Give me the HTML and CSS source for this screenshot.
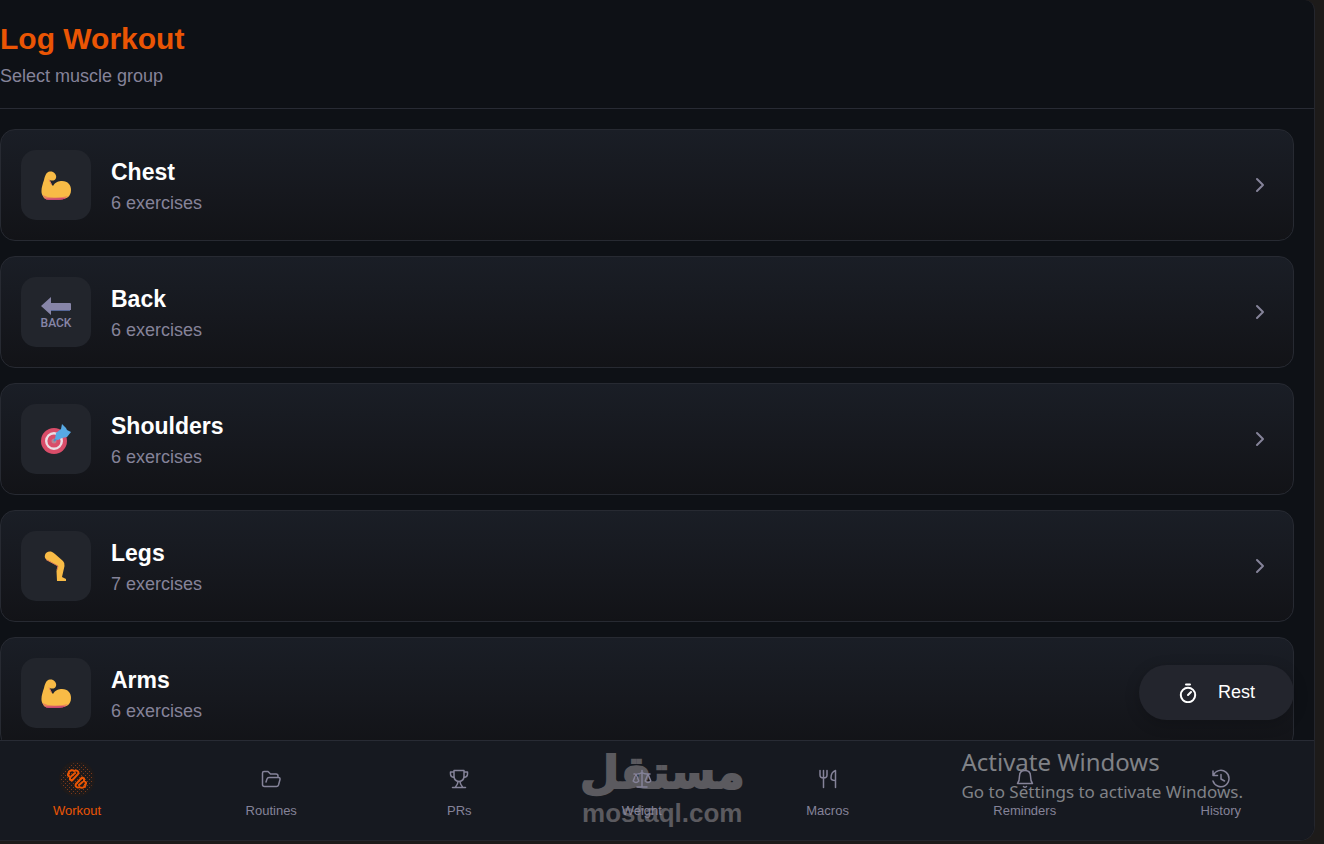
FILE: index.html
```html
<!DOCTYPE html>
<html lang="en">
<head>
<meta charset="utf-8">
<meta name="viewport" content="width=device-width, initial-scale=1">
<title>Log Workout</title>
<link rel="stylesheet" href="styles.css">
</head>
<body>
<svg class="sprite" aria-hidden="true">
  <symbol id="arm" viewBox="0 -1 30 30">
    <path d="M2 25C-1 21 1 15 3 9C4 5 5 1 9 .5C13 0 16 4 15 7C14 10 11 10 8.500 9C9 12 11 14 12 15C14 11 18 10 21 10C27 10 30 14 30 19C30 26 25 28 20 28H6Q3 28 2 25Z" fill="#f8bb46"/>
    <path d="M1.500 24Q7 27 15 26.500T27 25Q24 28.500 19 28.500H6Q3 28 1.500 24Z" fill="#e8835a"/>
    <path d="M4 27.500Q14 27 25 27Q22 29 18 29H8Q5 29 4 27.500Z" fill="#c94a72"/>
    <path d="M8 8.500L10.500 13.500" stroke="#e8835a" fill="none"/>
  </symbol>
  <symbol id="chevron" viewBox="-1 -2 24 24">
    <path d="M7 4L13 10L7 16" fill="none" stroke="currentColor" stroke-width="2" stroke-linecap="round" stroke-linejoin="round"/>
  </symbol>
</svg>
<div class="app">
  <header class="header">
    <h1 class="title">Log Workout</h1>
    <p class="subtitle">Select muscle group</p>
  </header>

  <main class="groups">
    <button class="card" type="button">
      <span class="tile"><svg class="emoji" aria-hidden="true"><use href="#arm"/></svg></span>
      <span class="info"><span class="name">Chest</span><span class="count">6 exercises</span></span>
      <svg class="chevron" aria-hidden="true"><use href="#chevron"/></svg>
    </button>
    <button class="card" type="button">
      <span class="tile">
        <svg class="emoji" viewBox="0 0 30 30" aria-hidden="true">
          <path d="M0 9L10 0V6H29Q30 6 30 7V13H10V18Z" fill="#8785a8"/>
          <path d="M10 13.500H29" stroke="#566696"/>
          <text class="back-label" x="15" y="30" text-anchor="middle">BACK</text>
        </svg>
      </span>
      <span class="info"><span class="name">Back</span><span class="count">6 exercises</span></span>
      <svg class="chevron" aria-hidden="true"><use href="#chevron"/></svg>
    </button>
    <button class="card" type="button">
      <span class="tile">
        <svg class="emoji" viewBox="0 0 30 30" aria-hidden="true">
          <circle cx="13" cy="17" r="13" fill="#d94d69"/>
          <circle cx="13" cy="17" r="7.800" fill="none" stroke="#eadfe5" stroke-width="2.400"/>
          <circle cx="13" cy="17" r="2.500" fill="#b78491"/>
          <path d="M13 17L20 10" stroke="#4b91ca" stroke-width="2"/>
          <path d="M14 15L15 9L20 5L21 0L25 4L26 6L30 8L26 13L21 14L17 16Z" fill="#57a9e4"/>
        </svg>
      </span>
      <span class="info"><span class="name">Shoulders</span><span class="count">6 exercises</span></span>
      <svg class="chevron" aria-hidden="true"><use href="#chevron"/></svg>
    </button>
    <button class="card" type="button">
      <span class="tile">
        <svg class="emoji" viewBox="0 0 30 30" aria-hidden="true">
          <path d="M4 4Q5 0 10 .5Q12 1 14 3L22 10Q24 12 23.500 15L21 26L25 28V30H16L15.500 20L17 15L6 9Q3 7 4 4Z" fill="#f8bb46"/>
          <path d="M5 8.500L17 15L16 19" stroke="#dd7c55" fill="none"/>
        </svg>
      </span>
      <span class="info"><span class="name">Legs</span><span class="count">7 exercises</span></span>
      <svg class="chevron" aria-hidden="true"><use href="#chevron"/></svg>
    </button>
    <button class="card" type="button">
      <span class="tile"><svg class="emoji" aria-hidden="true"><use href="#arm"/></svg></span>
      <span class="info"><span class="name">Arms</span><span class="count">6 exercises</span></span>
      <svg class="chevron" aria-hidden="true"><use href="#chevron"/></svg>
    </button>
  </main>

  <button class="rest" type="button">
    <svg class="icon bold" viewBox="0 0 20 20" aria-hidden="true"><circle cx="10" cy="12" r="7.200"/><path d="M10 12L13 9M8 1.500H12"/></svg>
    Rest
  </button>

  <nav class="tabs" aria-label="Main">
    <a class="tab active" href="#workout">
      <span class="tab-icon">
        <svg class="glow" viewBox="0 0 36 36" aria-hidden="true">
          <defs><pattern id="dots" width="4" height="4" patternUnits="userSpaceOnUse"><path d="M0 0H1V1H0ZM2 2H3V3H2Z" fill="#a5461a"/></pattern></defs>
          <circle cx="18" cy="18" r="18" fill="#1d1a1b"/>
          <circle cx="18" cy="18" r="16" fill="url(#dots)" opacity=".7"/>
        </svg>
        <svg class="icon bold" viewBox="0 0 20 20" aria-hidden="true"><path d="M3 2Q1 3 2 4.500Q0 5.500 1.500 7L3 8V10.500L5 11.500L11 5Q12 3 10.500 2Q9 1 7.500 2Q5 .5 3 2ZM4.500 7L8 4"/><path d="M17 18Q19 17 18 15.500Q20 14.500 18.500 13L17 12V9.500L15 8.500L9 15Q8 17 9.500 18Q11 19 12.500 18Q15 19.500 17 18ZM15.500 13L12 16"/></svg>
      </span>
      Workout
    </a>
    <a class="tab" href="#routines">
      <span class="tab-icon"><svg class="icon" viewBox="0 0 20 20" aria-hidden="true"><path d="M3.500 17.500Q1.500 17.500 1.500 15.500V4Q1.500 2.500 3 2.500H7L9.500 5H15Q17 5 17 7V8.500M3.500 17.500H15.500Q17 17.500 17.500 16L19 10.500Q19.300 8.500 17.500 8.500H8Q6.500 8.500 6 10L5 13"/></svg></span>
      Routines
    </a>
    <a class="tab" href="#prs">
      <span class="tab-icon"><svg class="icon" viewBox="0 0 20 20" aria-hidden="true"><path d="M5 1.500H15V7Q15 12 10 12.500Q5 12 5 7ZM5 3H1.500V5Q1.500 8 5.200 8.500M15 3H18.500V5Q18.500 8 14.800 8.500M9 12.500Q9 15 6.500 18M11 12.500Q11 15 13.500 18M3.500 18.500H16.500"/></svg></span>
      PRs
    </a>
    <a class="tab" href="#weight">
      <span class="tab-icon"><svg class="icon" viewBox="0 0 20 20" aria-hidden="true"><path d="M10 1.500V17M5 18H15M2 5H5Q8 5 10 3.500Q12 5 15 5H18M4 5L1.200 12Q4 15 6.800 12ZM16 5L13.200 12Q16 15 18.800 12Z"/></svg></span>
      Weight
    </a>
    <a class="tab" href="#macros">
      <span class="tab-icon"><svg class="icon" viewBox="0 0 20 20" aria-hidden="true"><path d="M2 1.500V6Q2 9 5.500 9T9 6V1.500M5.500 1.500V18.500M17.500 18.500V1.500Q13 3 13 9Q13 11.500 17.500 11.500"/></svg></span>
      Macros
    </a>
    <a class="tab" href="#reminders">
      <span class="tab-icon"><svg class="icon" viewBox="0 0 20 20" aria-hidden="true"><path d="M2.500 14.500Q4.500 12 4.500 7Q4.500 1.500 10 1.500T15.500 7Q15.500 12 17.500 14.500ZM8.500 17.500Q10 19 11.500 17.500"/></svg></span>
      Reminders
    </a>
    <a class="tab" href="#history">
      <span class="tab-icon"><svg class="icon" viewBox="0 0 20 20" aria-hidden="true"><path d="M2 2V6.500H6.500M2.200 6.500A8.200 8.200 0 1 1 2 12M10 5.500V10L13.500 12"/></svg></span>
      History
    </a>
    <div class="brand">
      <span class="brand-ar" lang="ar" dir="rtl">مستقل</span>
      <span class="brand-en">mostaql.com</span>
    </div>
    <div class="activate">
      <p class="activate-title">Activate Windows</p>
      <p class="activate-text">Go to Settings to activate Windows.</p>
    </div>
  </nav>
</div>
</body>
</html>
```
FILE: styles.css
```css
* {
  box-sizing: border-box;
}

body {
  margin: 0;
  height: 100vh;
  padding: 0 9px 3px 0;
  background: #1d1b1a;
  color: #858399;
  font-family: "Liberation Sans", Arial, sans-serif;
}

h1,
p {
  margin: 0;
}

.sprite {
  position: absolute;
  width: 0;
  height: 0;
}

.app {
  position: relative;
  display: flex;
  flex-direction: column;
  height: 100%;
  overflow: hidden;
  background: #0e1116;
  border: solid #24262d;
  border-width: 0 1px 1px 0;
  border-radius: 0 10px 15px 0;
}

.header {
  padding: 20px 0;
  border-bottom: 1px solid #282b34;
}

.title {
  color: #ea5504;
  font-size: 30px;
  line-height: 38px;
}

.subtitle {
  margin-top: 7px;
  font-size: 18px;
  line-height: 23px;
}

.groups {
  display: flex;
  flex: 1;
  flex-direction: column;
  gap: 15px;
  min-height: 0;
  padding: 20px 20px 0 0;
  overflow: hidden;
}

.card {
  display: flex;
  flex: none;
  align-items: center;
  gap: 20px;
  padding: 20px;
  border: 1px solid #272a32;
  border-radius: 15px;
  background: linear-gradient(#1a1e26, #16181e 55%, #121317);
  color: inherit;
  font: inherit;
  text-align: left;
}

.tile {
  display: grid;
  place-items: center;
  width: 70px;
  height: 70px;
  border-radius: 15px;
  background: #22252c;
}

.emoji {
  width: 30px;
  height: 30px;
  overflow: visible;
}

.back-label {
  fill: #8785a8;
  font: 500 12px Roboto, sans-serif;
}

.info {
  display: flex;
  flex: 1;
  flex-direction: column;
  gap: 4px;
}

.name {
  color: #fff;
  font-size: 23px;
  font-weight: 700;
  line-height: 32px;
}

.count {
  font-size: 18px;
  line-height: 23px;
}

.chevron {
  width: 24px;
  height: 24px;
}

.icon {
  width: 20px;
  height: 20px;
  fill: none;
  stroke: currentColor;
  stroke-width: 1.5;
  stroke-linecap: round;
  stroke-linejoin: round;
}

.bold {
  stroke-width: 2;
}

.rest {
  position: absolute;
  right: 20px;
  bottom: 120px;
  display: flex;
  align-items: center;
  gap: 20px;
  height: 55px;
  padding: 0 39px;
  border: 0;
  border-radius: 28px;
  background: #23252d;
  box-shadow: 0 4px 15px #0003;
  color: #fff;
  font: 18px "Liberation Sans", Arial, sans-serif;
}

.tabs {
  position: relative;
  isolation: isolate;
  display: flex;
  justify-content: space-between;
  padding: 20px 73px 21px 53px;
  border-top: 1px solid #282b34;
  background: #161920;
}

.tab {
  display: flex;
  flex-direction: column;
  align-items: center;
  gap: 6px;
  color: inherit;
  font-size: 13px;
  line-height: 16px;
  text-decoration: none;
}

.tab-icon {
  display: grid;
  place-items: center;
  width: 36px;
  height: 36px;
}

.tab-icon > svg {
  grid-area: 1 / 1;
}

.glow {
  width: 36px;
  height: 36px;
}

.active {
  color: #ea5504;
}

.brand {
  position: absolute;
  z-index: -1;
  top: 5px;
  left: 580px;
  display: flex;
  flex-direction: column;
  align-items: center;
  color: #5b5a5f;
  font-weight: 700;
  pointer-events: none;
}

.brand-ar {
  font-family: "DejaVu Sans", sans-serif;
  font-size: 45px;
  line-height: 54px;
  -webkit-text-stroke: 2px #5b5a5f;
}

.brand-en {
  font-size: 26px;
  line-height: 26px;
}

.activate {
  position: absolute;
  z-index: -1;
  top: 4px;
  right: 71px;
  color: #808287;
  font-family: "Noto Sans", sans-serif;
  pointer-events: none;
}

.activate-title {
  font-size: 24px;
  line-height: 34px;
}

.activate-text {
  font-size: 17px;
  line-height: 26px;
}
```
